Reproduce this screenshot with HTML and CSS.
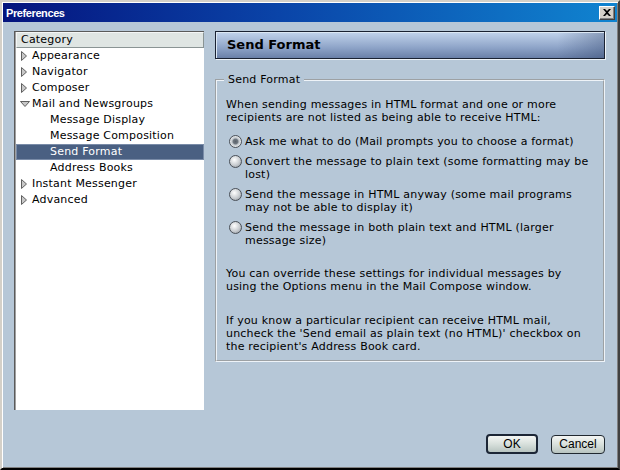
FILE: index.html
```html
<!DOCTYPE html>
<html lang="en">

<head>
    <meta charset="UTF-8" />
    <meta name="viewport" content="width=device-width, initial-scale=1.0" />
    <title>Preferences</title>
    <link rel="stylesheet" href="styles.css">
</head>

<body>
    <div class="window">
        <div class="titlebar">
            <span class="title">Preferences</span>
            <span class="close-btn">
                <svg width="8" height="7" viewBox="0 0 8 7">
                    <path d="M0 0h2l2 2 2-2h2L5 3.5 8 7H6L4 5 2 7H0l3-3.5z" fill="#000" />
                </svg>
            </span>
        </div>

        <div class="main">
            <div class="tree">
                <div class="tree-head">Category</div>
                <div class="row"><span class="twisty closed"></span>Appearance</div>
                <div class="row"><span class="twisty closed"></span>Navigator</div>
                <div class="row"><span class="twisty closed"></span>Composer</div>
                <div class="row"><span class="twisty open"></span>Mail and Newsgroups</div>
                <div class="row child">Message Display</div>
                <div class="row child">Message Composition</div>
                <div class="row child selected">Send Format</div>
                <div class="row child">Address Books</div>
                <div class="row"><span class="twisty closed"></span>Instant Messenger</div>
                <div class="row"><span class="twisty closed"></span>Advanced</div>
            </div>

            <div class="panel">
                <div class="panel-header">Send Format</div>

                <fieldset class="group">
                    <legend>Send Format</legend>
                    <p class="intro">When sending messages in HTML format and one or more recipients are not listed as being able to receive HTML:</p>

                    <label class="radio"><span class="dot checked"></span><span>Ask me what to do (Mail prompts you to choose a format)</span></label>
                    <label class="radio"><span class="dot"></span><span>Convert the message to plain text (some formatting may be lost)</span></label>
                    <label class="radio"><span class="dot"></span><span>Send the message in HTML anyway (some mail programs may not be able to display it)</span></label>
                    <label class="radio"><span class="dot"></span><span>Send the message in both plain text and HTML (larger message size)</span></label>

                    <p class="note">You can override these settings for individual messages by using the Options menu in the Mail Compose window.</p>
                    <p class="note">If you know a particular recipient can receive HTML mail, uncheck the 'Send email as plain text (no HTML)' checkbox on the recipient's Address Book card.</p>
                </fieldset>
            </div>
        </div>

        <div class="buttons">
            <button class="btn default">OK</button>
            <button class="btn">Cancel</button>
        </div>
    </div>
</body>

</html>
```

FILE: styles.css
```css
body {
    margin: 0;
    font-family: "DejaVu Sans", Verdana, sans-serif;
    font-size: 11px;
    letter-spacing: 0.2px;
    color: #000;
}

.window {
    width: 620px;
    height: 470px;
    box-sizing: border-box;
    background: #b6c7d7;
    border-style: solid;
    border-width: 2px;
    border-color: #d4d0c8 #404040 #000 #d4d0c8;
    box-shadow: inset 1px 1px 0 #fff, inset -1px -1px 0 #808080;
    padding: 1px;
    display: flex;
    flex-direction: column;
}

.titlebar {
    height: 19px;
    flex: none;
    display: flex;
    align-items: center;
    justify-content: space-between;
    padding: 0 2px 0 3px;
    background: linear-gradient(to right, #05147e, #0a44a8 45%, #1084d0);
}

.title {
    font-family: "Liberation Sans", Arial, sans-serif;
    font-weight: bold;
    font-size: 11px;
    color: #fff;
    letter-spacing: -0.4px;
}

.close-btn {
    width: 16px;
    height: 14px;
    box-sizing: border-box;
    background: #d4d0c8;
    border-style: solid;
    border-width: 1px;
    border-color: #fff #404040 #404040 #fff;
    box-shadow: inset -1px -1px 0 #808080;
    display: flex;
    align-items: center;
    justify-content: center;
}

.main {
    flex: 1;
    display: flex;
    gap: 11px;
    padding: 9px 12px 0 11px;
}

/* left category tree */
.tree {
    width: 190px;
    height: 379px;
    box-sizing: border-box;
    background: #fff;
    border-left: 1px solid #5a5a5a;
    border-top: 1px solid #5a5a5a;
    box-shadow: inset 1px 1px 0 #a0a0a0;
    padding-left: 1px;
}

.tree-head {
    height: 16px;
    line-height: 14px;
    box-sizing: border-box;
    background: #dfe5e3;
    border: 1px solid #8a9494;
    border-top-color: #f4f6f6;
    border-left-color: #f4f6f6;
    padding-left: 4px;
    color: #000;
}

.row {
    height: 16px;
    line-height: 16px;
    display: flex;
    align-items: center;
    padding-left: 4px;
    white-space: nowrap;
}

.row.child {
    padding-left: 34px;
}

.row.selected {
    background: #4a6082;
    color: #fff;
    box-shadow: inset 0 0 0 1px #7a8ca8;
}

.twisty {
    width: 12px;
    height: 12px;
    flex: none;
    display: inline-block;
    background-repeat: no-repeat;
}

.twisty.closed {
    background-image: url("data:image/svg+xml;utf8,<svg xmlns='http://www.w3.org/2000/svg' width='12' height='12'><path d='M1.5 1.5v9l5-4.5z' fill='%23c8c8c8' stroke='%23606060'/></svg>");
}

.twisty.open {
    background-image: url("data:image/svg+xml;utf8,<svg xmlns='http://www.w3.org/2000/svg' width='12' height='12'><path d='M0.5 3.5h9l-4.5 5z' fill='%23c8c8c8' stroke='%23606060'/></svg>");
}

/* right panel */
.panel {
    width: 390px;
    display: flex;
    flex-direction: column;
}

.panel-header {
    height: 28px;
    box-sizing: border-box;
    border: 1px solid #1a2232;
    box-shadow: 1px 1px 0 #eef3f8, inset 1px 1px 0 #dce8f4;
    background:
        linear-gradient(to right, rgba(40, 60, 100, 0) 88%, rgba(40, 60, 100, 0.35)),
        linear-gradient(to bottom, #c2d4ec, #8ea4c8 60%, #6a80a8);
    font-weight: bold;
    font-size: 13px;
    letter-spacing: 0;
    line-height: 26px;
    padding-left: 11px;
}

.group {
    margin: 14px 0 0;
    padding: 12px 8px 7px 9px;
    border: 2px groove #eef3f8;
    min-width: 0;
}

.group legend {
    padding: 0 4px;
    margin-left: -2px;
}

.group p {
    margin: 0;
    line-height: 13px;
}

.intro {
    margin-bottom: 11px !important;
}

.radio {
    display: flex;
    align-items: flex-start;
    gap: 3px;
    margin-bottom: 7px;
    padding-left: 3px;
    line-height: 13px;
}

.dot {
    width: 13px;
    height: 13px;
    flex: none;
    box-sizing: border-box;
    border-radius: 50%;
    border: 1px solid #4a5058;
    background: radial-gradient(circle at 40% 35%, #ffffff, #c8ccd0 55%, #8a9098);
}

.dot.checked {
    background: radial-gradient(circle at 50% 50%, #58606a 0, #707880 30%, #c0c6cc 45%, #e8eaec 70%, #9aa0a8);
}

.note {
    margin-top: 21px !important;
}

.radio + .note {
    margin-top: 20px !important;
}

/* dialog buttons */
.buttons {
    display: flex;
    justify-content: flex-end;
    align-items: center;
    gap: 13px;
    padding: 0 12px 13px 0;
}

.btn {
    font-family: "Liberation Sans", Arial, sans-serif;
    font-size: 12px;
    letter-spacing: 0;
    height: 19px;
    width: 54px;
    padding: 0;
    border: 1px solid #202830;
    border-radius: 4px;
    background: linear-gradient(to bottom, #f4f6f4, #d8e0dc 50%, #b8c4c0);
    color: #000;
}

.btn.default {
    width: 52px;
    height: 20px;
    border: 2px solid #1c2636;
}
```
